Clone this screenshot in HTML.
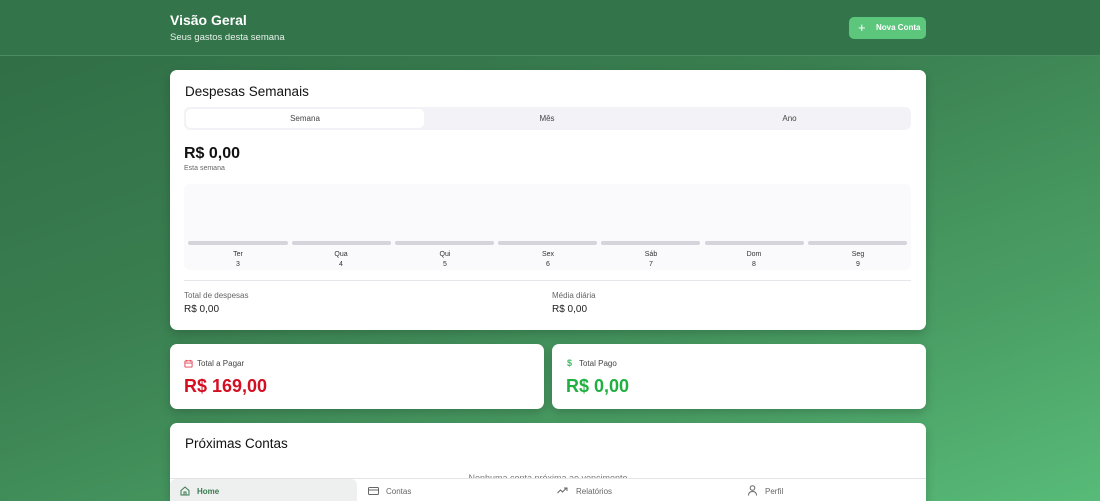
<!DOCTYPE html>
<html style="width:1100px;height:501px;overflow:hidden"><head><meta charset="utf-8"><style>
*{box-sizing:border-box;margin:0;padding:0}
body{width:1100px;height:501px;overflow:hidden;font-family:"Liberation Sans",sans-serif;background:linear-gradient(160deg,#2f6c45 0%,#3a7f50 40%,#4a9f65 75%,#58bb78 100%);position:relative}
.hdr{position:absolute;left:0;top:0;width:1100px;height:56px;background:#33744a;border-bottom:1px solid #4c8a60}
.t1{position:absolute;left:170px;top:12px;color:#fff;font-weight:bold;font-size:14px}
.t2{position:absolute;left:170px;top:32px;color:#e8f2ea;font-size:9.5px}
.btn{position:absolute;left:849px;top:17px;width:77px;height:22px;background:#5cc67c;border-radius:5px;color:#fff;font-size:8px;font-weight:bold;line-height:22px;padding-left:27px;white-space:nowrap;overflow:hidden}
.btn:before{content:"+";position:absolute;left:9px;top:0;font-size:13px;font-weight:normal}
.card{position:absolute;background:#fff;border-radius:7px;box-shadow:0 4px 10px rgba(0,0,0,.18);overflow:hidden}
.h{font-size:13.5px;color:#111}
.seg{position:absolute;left:14px;top:37px;width:727px;height:23px;background:#f3f3f7;border-radius:6px}
.seg div{position:absolute;top:0;height:23px;line-height:23px;font-size:8px;color:#444;text-align:center}
.chart{position:absolute;left:14px;top:114px;width:727px;height:86px;background:#fafafd;border-radius:6px}
.bar{position:absolute;top:57px;height:4px;background:#d4d4da;border-radius:2px}
.lbl{position:absolute;top:66px;font-size:7px;color:#333;text-align:center;width:40px;line-height:10px}
.small{font-size:8px;color:#666}
</style></head><body>
<div class="hdr"></div>
<div class="t1">Visão Geral</div>
<div class="t2">Seus gastos desta semana</div>
<div class="btn">Nova Conta</div>

<div class="card" style="left:170px;top:70px;width:756px;height:260px">
 <div class="h" style="position:absolute;left:15px;top:14px">Despesas Semanais</div>
 <div class="seg">
  <div style="left:2px;top:2px;height:19px;line-height:19px;width:238px;background:#fff;border-radius:5px">Semana</div>
  <div style="left:242px;width:242px">Mês</div>
  <div style="left:484px;width:243px">Ano</div>
 </div>
 <div style="position:absolute;left:14px;top:75px;font-size:16px;font-weight:bold;color:#111">R$ 0,00</div>
 <div class="small" style="position:absolute;left:14px;top:95px;font-size:7px">Esta semana</div>
 <div class="chart">
  <div class="bar" style="left:4px;width:100px"></div><div class="lbl" style="left:34px">Ter<br>3</div>
  <div class="bar" style="left:108px;width:99px"></div><div class="lbl" style="left:137px">Qua<br>4</div>
  <div class="bar" style="left:211px;width:99px"></div><div class="lbl" style="left:241px">Qui<br>5</div>
  <div class="bar" style="left:314px;width:99px"></div><div class="lbl" style="left:344px">Sex<br>6</div>
  <div class="bar" style="left:417px;width:99px"></div><div class="lbl" style="left:447px">Sáb<br>7</div>
  <div class="bar" style="left:521px;width:99px"></div><div class="lbl" style="left:550px">Dom<br>8</div>
  <div class="bar" style="left:624px;width:99px"></div><div class="lbl" style="left:654px">Seg<br>9</div>
 </div>
 <div style="position:absolute;left:14px;top:210px;width:727px;border-top:1px solid #e6e6ea"></div>
 <div class="small" style="position:absolute;left:14px;top:221px">Total de despesas</div>
 <div style="position:absolute;left:14px;top:234px;font-size:10px;color:#222">R$ 0,00</div>
 <div class="small" style="position:absolute;left:382px;top:221px">Média diária</div>
 <div style="position:absolute;left:382px;top:234px;font-size:10px;color:#222">R$ 0,00</div>
</div>

<div class="card" style="left:170px;top:344px;width:374px;height:65px">
 <svg style="position:absolute;left:14px;top:15px" width="9" height="9" viewBox="0 0 10 10" fill="none" stroke="#e04050" stroke-width="1"><rect x="1" y="2" width="8" height="7" rx="1"/><path d="M1 4.5h8M3 1v2M7 1v2"/></svg>
 <div style="position:absolute;left:27px;top:15px;font-size:8px;color:#444">Total a Pagar</div>
 <div style="position:absolute;left:14px;top:32px;font-size:18px;font-weight:bold;color:#d40f22">R$ 169,00</div>
</div>
<div class="card" style="left:552px;top:344px;width:374px;height:65px">
 <div style="position:absolute;left:15px;top:14px;font-size:9px;color:#3fb765;font-weight:bold">$</div>
 <div style="position:absolute;left:27px;top:15px;font-size:8px;color:#444">Total Pago</div>
 <div style="position:absolute;left:14px;top:32px;font-size:18px;font-weight:bold;color:#20b040">R$ 0,00</div>
</div>
<div class="card" style="left:170px;top:423px;width:756px;height:78px;border-radius:7px 7px 0 0">
 <div class="h" style="position:absolute;left:15px;top:13px">Próximas Contas</div>
 <div style="position:absolute;left:0;width:756px;top:50px;text-align:center;font-size:9px;color:#777">Nenhuma conta próxima ao vencimento</div>
</div>

<div style="position:absolute;left:170px;top:478px;width:756px;height:23px;background:#fff;border-top:1px solid #e4e4e8;font-size:8px;color:#666">
 <div style="position:absolute;left:0;top:0;width:187px;height:23px;background:#edf0ee;border-radius:6px 6px 0 0"></div>
 <svg style="position:absolute;left:10px;top:7px" width="10" height="10" viewBox="0 0 10 10" fill="none" stroke="#3a7a50" stroke-width="1"><path d="M1 4.5L5 1l4 3.5V9H1z M4 9V6h2v3"/></svg>
 <div style="position:absolute;left:27px;top:8px;color:#3a7a50;font-weight:bold">Home</div>
 <svg style="position:absolute;left:198px;top:8px" width="11" height="8" viewBox="0 0 11 8" fill="none" stroke="#666" stroke-width="1"><rect x="0.5" y="0.5" width="10" height="7" rx="1"/><path d="M0.5 3h10"/></svg>
 <div style="position:absolute;left:216px;top:8px">Contas</div>
 <svg style="position:absolute;left:387px;top:8px" width="11" height="7" viewBox="0 0 11 7" fill="none" stroke="#666" stroke-width="1"><path d="M0.5 6l3-3 2 2 4-4M7 1h3v3"/></svg>
 <div style="position:absolute;left:406px;top:8px">Relatórios</div>
 <svg style="position:absolute;left:578px;top:6px" width="9" height="11" viewBox="0 0 9 11" fill="none" stroke="#666" stroke-width="1"><circle cx="4.5" cy="3" r="2.3"/><path d="M0.5 10.5c0-3 1.8-4 4-4s4 1 4 4"/></svg>
 <div style="position:absolute;left:595px;top:8px">Perfil</div>
</div>
</body></html>
